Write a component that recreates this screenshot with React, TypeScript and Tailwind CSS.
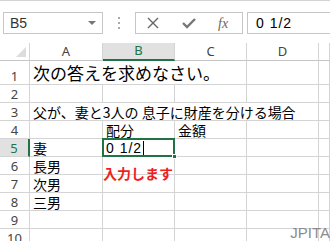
import React from "react";

const GRID = "border-[#d4d4d4]";
const JP = "font-['Noto_Sans_CJK_JP',sans-serif]";

function Cell({
  children,
  className = "",
  span = "",
}: {
  children?: React.ReactNode;
  className?: string;
  span?: string;
}) {
  return (
    <div
      className={`relative flex items-end whitespace-nowrap border-b border-r ${GRID} px-[3px] text-[14px] leading-[16px] text-black ${JP} ${span} ${className}`}
    >
      {children}
    </div>
  );
}

function RowHead({ n, active = false }: { n: number; active?: boolean }) {
  return (
    <div
      className={`flex items-end justify-center border-b ${GRID} text-[13px] leading-[16px] font-['Noto_Sans',sans-serif] ${
        active
          ? "border-r-2 border-r-[#217346] bg-[#e1e1e1] text-[#217346]"
          : "border-r text-[#444]"
      }`}
    >
      {n}
    </div>
  );
}

function ColHead({ label, active = false }: { label: string; active?: boolean }) {
  return (
    <div
      className={`flex items-center justify-center border-r ${GRID} text-[13px] font-['Noto_Sans',sans-serif] ${
        active
          ? "border-b-2 border-b-[#217346] bg-[#e1e1e1] text-[#217346]"
          : "border-b border-b-[#c6c6c6] text-[#444]"
      }`}
    >
      {label}
    </div>
  );
}

export default function App() {
  const rows = [6, 7, 8];
  const names = ["長男", "次男", "三男"];

  return (
    <div className="relative h-[241px] w-[330px] overflow-hidden bg-white">
      {/* formula bar */}
      <div className="flex h-[43px] items-start border-t border-[#d4d4d4] pt-[11px]">
        <div className="ml-[3px] flex h-[22px] w-[100px] items-center justify-between border border-[#c6c6c6] pl-[6px] pr-[6px] text-[14px] text-[#333] font-['Liberation_Sans',sans-serif]">
          <span>B5</span>
          <span className="h-0 w-0 border-x-[4px] border-t-[4px] border-x-transparent border-t-[#777]" />
        </div>
        <div className="flex h-[22px] w-[32px] flex-col items-center justify-center gap-[3px]">
          <span className="h-[2px] w-[2px] bg-[#aaa]" />
          <span className="h-[2px] w-[2px] bg-[#aaa]" />
          <span className="h-[2px] w-[2px] bg-[#aaa]" />
        </div>
        <div className="flex h-[22px] w-[108px] items-center border border-[#c6c6c6]">
          <svg width="12" height="12" viewBox="0 0 12 12" className="ml-[11px]">
            <path d="M1 1 L11 11 M11 1 L1 11" stroke="#666" strokeWidth="1.4" />
          </svg>
          <svg width="14" height="12" viewBox="0 0 14 12" className="ml-[23px]">
            <path d="M1 6 L5 10 L13 2" stroke="#777" strokeWidth="2.4" fill="none" />
          </svg>
          <span className="ml-[22px] text-[14px] italic text-[#666] font-['Liberation_Serif',serif]">
            fx
          </span>
        </div>
        <div className="ml-[4px] flex h-[22px] flex-1 items-center border-y border-l border-[#c6c6c6] pl-[8px] text-[14px] tracking-[1px] text-black font-['Liberation_Sans',sans-serif]">
          0 1/2
        </div>
      </div>

      {/* sheet */}
      <div className="relative grid grid-cols-[30px_73px_72px_72px_72px_11px] grid-rows-[18px_24px_repeat(9,18px)]">
        <div className={`relative border-b border-r border-b-[#c6c6c6] ${GRID}`}>
          <span className="absolute bottom-[3px] right-[3px] h-0 w-0 border-l-[10px] border-t-[10px] border-l-transparent border-t-transparent border-r-[10px] border-r-[#dcdcdc]" />
        </div>
        <ColHead label="A" />
        <ColHead label="B" active />
        <ColHead label="C" />
        <ColHead label="D" />
        <ColHead label="" />

        {/* row 1 */}
        <RowHead n={1} />
        <Cell span="col-span-3" className="text-[17px] leading-[22px]">
          次の答えを求めなさい。
        </Cell>
        <Cell />
        <Cell />

        {/* row 2 */}
        <RowHead n={2} />
        <Cell />
        <Cell />
        <Cell />
        <Cell />
        <Cell />

        {/* row 3 */}
        <RowHead n={3} />
        <Cell span="col-span-4" className="text-[13.5px]">
          父が、妻と3人の 息子に財産を分ける場合
        </Cell>
        <Cell />

        {/* row 4 */}
        <RowHead n={4} />
        <Cell />
        <Cell>配分</Cell>
        <Cell>金額</Cell>
        <Cell />
        <Cell />

        {/* row 5 */}
        <RowHead n={5} active />
        <Cell>妻</Cell>
        <Cell className="overflow-visible">
          <span className="tracking-[1px] font-['Liberation_Sans',sans-serif]">0 1/2</span>
          <span className="mb-[1px] ml-[1px] h-[14px] w-px bg-black" />
          <div className="absolute -left-[1px] -top-[1px] bottom-[-1px] right-[-1px] z-10 border-2 border-[#217346]">
            <span className="absolute -bottom-[4px] -right-[4px] h-[5px] w-[5px] border border-white bg-[#217346]" />
          </div>
        </Cell>
        <Cell />
        <Cell />
        <Cell />

        {rows.map((n, i) => (
          <React.Fragment key={n}>
            <RowHead n={n} />
            <Cell>{names[i]}</Cell>
            <Cell />
            <Cell />
            <Cell />
            <Cell />
          </React.Fragment>
        ))}

        {[9, 10].map((n) => (
          <React.Fragment key={n}>
            <RowHead n={n} />
            <Cell />
            <Cell />
            <Cell />
            <Cell />
            <Cell />
          </React.Fragment>
        ))}

        {/* text box overlay */}
        <div
          className={`absolute left-[103px] top-[121px] text-[14px] font-bold leading-[18px] text-[#f01e1e] ${JP}`}
        >
          入力します
        </div>
      </div>

      <div className="absolute bottom-[1px] right-[0px] text-[15px] leading-[15px] text-[#8c8c8c] font-['Liberation_Sans',sans-serif]">
        JPITA
      </div>
    </div>
  );
}
